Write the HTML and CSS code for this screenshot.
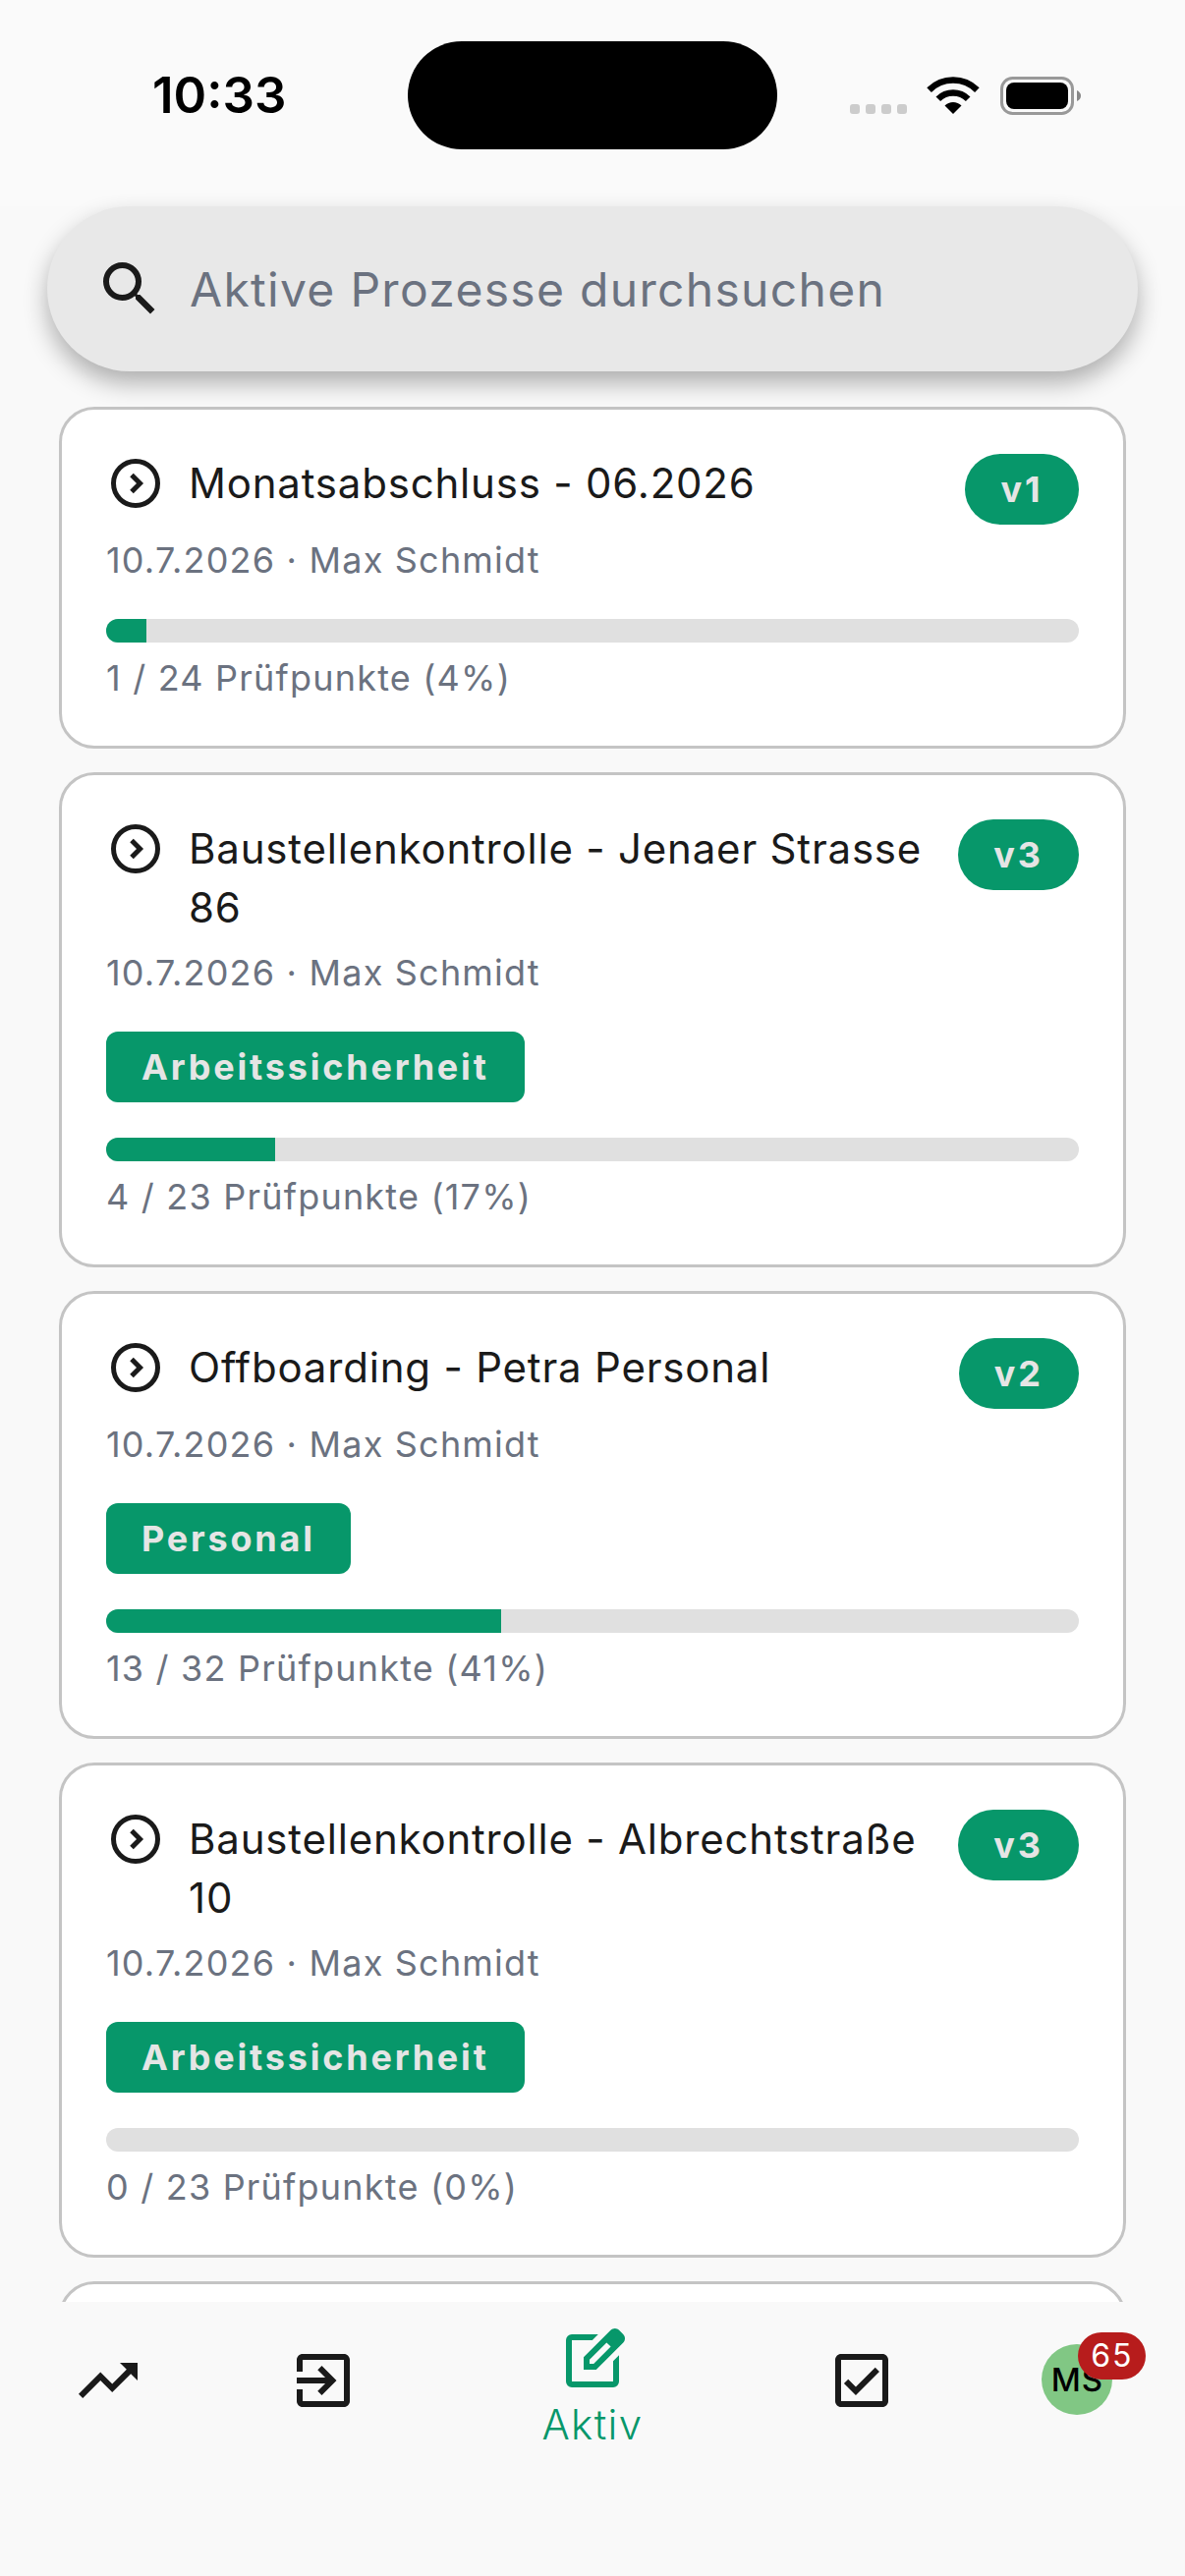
FILE: index.html
```html
<!DOCTYPE html>
<html lang="de">
<head>
	<meta charset="utf-8">
	<title>Aktive Prozesse</title>
	<link rel="stylesheet" href="styles.css">
</head>
<body>
	<div class="statusbar">
		<div class="time">10:33</div>
		<div class="island"></div>
		<svg class="status-icons" width="235" height="39" viewBox="0 0 235 39">
			<g fill="#ccc">
				<rect x="0" y="28" width="10" height="10" rx="3"/>
				<rect x="16" y="28" width="10" height="10" rx="3"/>
				<rect x="32" y="28" width="10" height="10" rx="3"/>
				<rect x="48" y="28" width="10" height="10" rx="3"/>
			</g>
			<path d="M80.6 13.6A34.5 34.5 0 0 1 129.4 13.6" fill="none" stroke="#000" stroke-width="6.5"/>
			<path d="M89.8 22.8A21.5 21.5 0 0 1 120.2 22.8" fill="none" stroke="#000" stroke-width="6.5"/>
			<path d="M105 38L96.5 29.5A12 12 0 0 1 113.5 29.5Z"/>
			<rect x="154.5" y="1.5" width="72" height="36" rx="11" fill="none" stroke="#999" stroke-width="3"/>
			<rect x="159" y="6" width="63" height="27" rx="8"/>
			<path d="M231 14q4 2 4 5.5t-4 5.5z" fill="#888"/>
		</svg>
	</div>

	<div class="search">
		<svg class="icon" viewBox="0 0 24 24"><path d="M15.5 14h-.79l-.28-.27A6.47 6.47 0 0 0 16 9.5 6.5 6.5 0 1 0 9.5 16c1.61 0 3.09-.59 4.23-1.57l.27.28v.79l5 4.99L20.49 19l-4.99-5zm-6 0C7.01 14 5 11.99 5 9.5S7.01 5 9.5 5 14 7.01 14 9.5 11.99 14 9.5 14z"/></svg>
		<span class="search-text">Aktive Prozesse durchsuchen</span>
	</div>

	<div class="list">
		<div class="card">
			<div class="card-head">
				<svg class="card-icon" viewBox="0 0 24 24"><circle cx="12" cy="12" r="9" fill="none" stroke="#1a1a1a" stroke-width="2"/><path d="M10.4 8.6L13.8 12l-3.4 3.4" fill="none" stroke="#1a1a1a" stroke-width="2"/></svg>
				<div class="card-title">Monatsabschluss - 06.2026</div>
				<div class="version">v1</div>
			</div>
			<div class="meta">10.7.2026 · Max Schmidt</div>
			<div class="bar"><div class="bar-fill" style="width:4.17%"></div></div>
			<div class="meta">1 / 24 Prüfpunkte (4%)</div>
		</div>

		<div class="card">
			<div class="card-head">
				<svg class="card-icon" viewBox="0 0 24 24"><circle cx="12" cy="12" r="9" fill="none" stroke="#1a1a1a" stroke-width="2"/><path d="M10.4 8.6L13.8 12l-3.4 3.4" fill="none" stroke="#1a1a1a" stroke-width="2"/></svg>
				<div class="card-title">Baustellenkontrolle - Jenaer Strasse 86</div>
				<div class="version">v3</div>
			</div>
			<div class="meta">10.7.2026 · Max Schmidt</div>
			<div class="tag">Arbeitssicherheit</div>
			<div class="bar"><div class="bar-fill" style="width:17.39%"></div></div>
			<div class="meta">4 / 23 Prüfpunkte (17%)</div>
		</div>

		<div class="card">
			<div class="card-head">
				<svg class="card-icon" viewBox="0 0 24 24"><circle cx="12" cy="12" r="9" fill="none" stroke="#1a1a1a" stroke-width="2"/><path d="M10.4 8.6L13.8 12l-3.4 3.4" fill="none" stroke="#1a1a1a" stroke-width="2"/></svg>
				<div class="card-title">Offboarding - Petra Personal</div>
				<div class="version">v2</div>
			</div>
			<div class="meta">10.7.2026 · Max Schmidt</div>
			<div class="tag">Personal</div>
			<div class="bar"><div class="bar-fill" style="width:40.63%"></div></div>
			<div class="meta">13 / 32 Prüfpunkte (41%)</div>
		</div>

		<div class="card">
			<div class="card-head">
				<svg class="card-icon" viewBox="0 0 24 24"><circle cx="12" cy="12" r="9" fill="none" stroke="#1a1a1a" stroke-width="2"/><path d="M10.4 8.6L13.8 12l-3.4 3.4" fill="none" stroke="#1a1a1a" stroke-width="2"/></svg>
				<div class="card-title">Baustellenkontrolle - Albrechtstraße 10</div>
				<div class="version">v3</div>
			</div>
			<div class="meta">10.7.2026 · Max Schmidt</div>
			<div class="tag">Arbeitssicherheit</div>
			<div class="bar"></div>
			<div class="meta">0 / 23 Prüfpunkte (0%)</div>
		</div>

		<div class="card"></div>
	</div>

	<div class="nav">
		<div class="nav-item">
			<svg class="icon" viewBox="0 0 24 24"><path d="M16 6l2.29 2.29-4.88 4.88-4-4L2 16.59 3.41 18l6-6 4 4 6.3-6.29L22 12V6z"/></svg>
		</div>
		<div class="nav-item">
			<svg class="icon" viewBox="0 0 24 24"><path d="M10.09 15.59L11.5 17l5-5-5-5-1.41 1.41L12.67 11H3v2h9.67l-2.58 2.59zM19 3H5c-1.11 0-2 .9-2 2v4h2V5h14v14H5v-4H3v4c0 1.1.89 2 2 2h14c1.1 0 2-.9 2-2V5c0-1.1-.9-2-2-2z"/></svg>
		</div>
		<div class="nav-item active">
			<svg class="icon" viewBox="0 -960 960 960"><path d="M200-120q-33 0-56.5-23.5T120-200v-560q0-33 23.5-56.5T200-840h357l-80 80H200v560h560v-278l80-80v358q0 33-23.5 56.5T760-120H200Zm160-240v-170l367-367q12-12 27-18t30-6q16 0 30.5 6t26.5 18l56 57q11 12 17 26.5t6 29.5q0 15-5.5 29.5T897-728L530-360H360Zm80-80h56l232-232-28-28-29-28-231 231v57Z"/></svg>
			<div class="nav-label">Aktiv</div>
		</div>
		<div class="nav-item">
			<svg class="icon" viewBox="0 0 24 24"><path d="M19 3H5c-1.1 0-2 .9-2 2v14c0 1.1.9 2 2 2h14c1.1 0 2-.9 2-2V5c0-1.1-.9-2-2-2zm0 16H5V5h14v14zM17.99 9l-1.41-1.42-6.59 6.59-2.58-2.57-1.42 1.41 4 3.99z"/></svg>
		</div>
		<div class="nav-item">
			<div class="avatar">MS<span class="badge">65</span></div>
		</div>
	</div>
</body>
</html>
```

FILE: styles.css
```css
*{
	box-sizing: border-box;
}
body{
	margin: 0;
	height: 2622px;
	overflow: hidden;
	display: flex;
	flex-direction: column;
	background-color: #f9f9f9;
	font-family: Inter, "Noto Sans", sans-serif;
	color: #1a1a1a;
}
.statusbar{
	height: 210px;
	flex: none;
	display: flex;
	align-items: flex-start;
	padding: 42px 0 0 155px;
	background-color: #fafafa;
}
.time{
	width: 260px;
	font-size: 51px;
	font-weight: 600;
	line-height: 110px;
	color: #000;
}
.island{
	width: 376px;
	height: 110px;
	border-radius: 55px;
	background-color: #000;
}
.status-icons{
	margin: 36px 0 0 74px;
}
.icon{
	display: block;
	width: 72px;
	height: 72px;
	flex: none;
	fill: #1a1a1a;
}

/* search */
.search{
	position: relative;
	z-index: 1;
	flex: none;
	display: flex;
	align-items: center;
	gap: 25px;
	height: 168px;
	margin: 0 48px;
	padding-left: 48px;
	border-radius: 84px;
	background-color: #e8e8e8;
	box-shadow: 0 12px 24px rgba(0,0,0,.3);
}
.search-text{
	font-size: 48px;
	letter-spacing: 1.3px;
	color: #6b7280;
}

/* cards */
.list{
	flex: 1;
	min-height: 0;
	overflow: hidden;
	padding: 36px 60px 0;
}
.card{
	min-height: 348px;
	margin-bottom: 24px;
	padding: 45px;
	border: 3px solid #c4c4c4;
	border-radius: 36px;
	background-color: #fff;
}
.card-head{
	display: flex;
	align-items: flex-start;
	min-height: 72px;
}
.card-icon{
	flex: none;
	width: 60px;
	height: 60px;
	margin-right: 24px;
}
.card-title{
	flex: 1;
	font-size: 42px;
	line-height: 60px;
	letter-spacing: .8px;
	padding-right: 24px;
}
.version{
	flex: none;
	min-width: 116px;
	height: 72px;
	padding: 0 36px;
	border-radius: 36px;
	background-color: #07976a;
	color: #e5e5e5;
	font-size: 36px;
	font-weight: 700;
	line-height: 72px;
	letter-spacing: 3px;
	text-align: center;
}
.meta{
	margin-top: 12px;
	font-size: 36px;
	line-height: 48px;
	letter-spacing: 1.2px;
	color: #6b7280;
}
.tag{
	width: fit-content;
	height: 72px;
	margin-top: 36px;
	padding: 0 36px;
	border-radius: 12px;
	background-color: #07976a;
	color: #e5e5e5;
	font-size: 36px;
	font-weight: 700;
	line-height: 72px;
	letter-spacing: 2.8px;
}
.bar{
	height: 24px;
	margin-top: 36px;
	border-radius: 12px;
	overflow: hidden;
	background-color: #e0e0e0;
}
.bar-fill{
	height: 100%;
	background-color: #07976a;
}

/* bottom navigation */
.nav{
	flex: none;
	height: 279px;
	display: grid;
	grid-template-columns: 2fr 2fr 3fr 2fr 2fr;
	background-color: #f9f9f9;
}
.nav-item{
	display: flex;
	flex-direction: column;
	align-items: center;
	padding-top: 44px;
}
.active{
	padding-top: 24px;
}
.active .icon{
	fill: #07976a;
}
.nav-label{
	margin-top: 5px;
	font-size: 42px;
	font-weight: 300;
	line-height: 48px;
	letter-spacing: 1.4px;
	color: #07976a;
}
.avatar{
	position: relative;
	width: 72px;
	height: 72px;
	margin-top: -1px;
	border-radius: 50%;
	background-color: #81c784;
	color: #000;
	font-size: 33px;
	font-weight: 500;
	line-height: 72px;
	letter-spacing: 1px;
	text-align: center;
}
.badge{
	position: absolute;
	top: -12px;
	left: 37px;
	width: 69px;
	height: 48px;
	border-radius: 24px;
	background-color: #b71c1c;
	color: #fff;
	font-size: 32px;
	font-weight: 400;
	line-height: 48px;
	letter-spacing: 2px;
	text-align: center;
}
```
